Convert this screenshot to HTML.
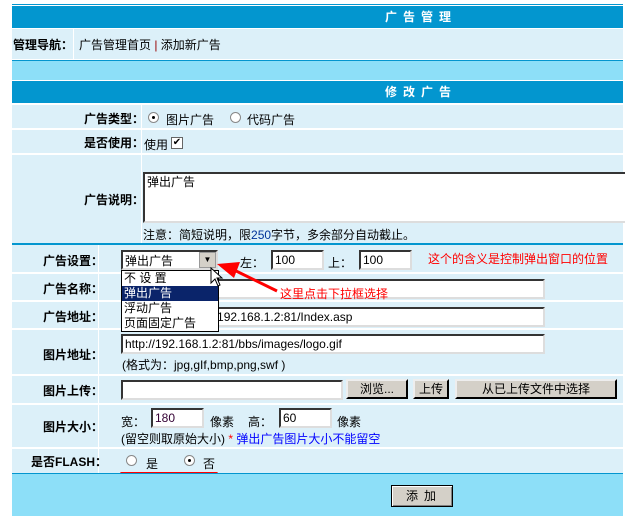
<!DOCTYPE html>
<html><head><meta charset="utf-8"><style>
*{margin:0;padding:0;box-sizing:border-box}
body{width:625px;height:522px;background:#fff;position:relative;overflow:hidden;font-family:"Liberation Sans","Noto Sans CJK SC","WenQuanYi Zen Hei",sans-serif;font-size:12px;color:#000}
.a{position:absolute;white-space:nowrap}
.hd{background:#0396cf;color:#fff;font-weight:bold;letter-spacing:6px}
.row{background:#dcf0f9}
.lb{font-weight:bold;text-align:right}
.inp{position:absolute;background:#fff;border:2px inset #888;border-right-color:#ddd;border-bottom-color:#ddd;font-size:12px;padding:1px 2px;line-height:14px}
.btn{position:absolute;background:#d4d0c8;border:2px outset #eee;border-right-color:#555;border-bottom-color:#555;text-align:center;line-height:16px}
.rad{position:absolute;width:11px;height:11px;border-radius:50%;background:#fff;border:1px solid #888}
.rad.on::after{content:"";position:absolute;left:3px;top:3px;width:3px;height:3px;background:#000;border-radius:50%}
</style></head><body>
<div class="a" style="left:12px;top:4px;width:611px;height:1px;background:#0396cf"></div>
<div class="a hd" style="left:12px;top:6px;width:611px;height:22px;line-height:22px;padding-left:373px">广告管理</div>
<div class="a row" style="left:12px;top:29px;width:611px;height:30px"></div>
<div class="a" style="left:73px;top:29px;width:1px;height:30px;background:#fff"></div>
<div class="a lb" style="left:13px;top:36px">管理导航：</div>
<div class="a" style="left:79px;top:36px">广告管理首页 <span style="color:#900">|</span> 添加新广告</div>
<div class="a" style="left:12px;top:60px;width:611px;height:1px;background:#0396cf"></div>
<div class="a" style="left:12px;top:61px;width:611px;height:19px;background:#8ddff8"></div>
<div class="a" style="left:12px;top:81px;width:611px;height:1px;background:#0396cf"></div>
<div class="a hd" style="left:12px;top:82px;width:611px;height:21px;line-height:21px;padding-left:373px">修改广告</div>

<div class="a row" style="left:12px;top:105px;width:611px;height:23px"></div>
<div class="a row" style="left:12px;top:130px;width:611px;height:23px"></div>
<div class="a row" style="left:12px;top:155px;width:611px;height:88px"></div>
<div class="a" style="left:141px;top:105px;width:1px;height:138px;background:#fff"></div>
<div class="a lb" style="left:84px;top:110px">广告类型：</div>
<div class="rad on" style="left:148px;top:112px"></div>
<div class="a" style="left:166px;top:111px">图片广告</div>
<div class="rad" style="left:230px;top:112px"></div>
<div class="a" style="left:247px;top:111px">代码广告</div>
<div class="a lb" style="left:84px;top:134px">是否使用：</div>
<div class="a" style="left:144px;top:136px">使用</div>
<div class="a" style="left:171px;top:137px;width:12px;height:12px;background:#fff;border:1px solid #666;font-size:10px;line-height:10px;text-align:center">✔</div>
<div class="a lb" style="left:84px;top:191px">广告说明：</div>
<div class="inp" style="left:143px;top:172px;width:484px;height:51px">弹出广告</div>
<div class="a" style="left:143px;top:226px">注意：简短说明，限<span style="color:#039">250</span>字节，多余部分自动截止。</div>

<div class="a" style="left:12px;top:243px;width:611px;height:2px;background:#0396cf"></div>
<div class="a row" style="left:12px;top:245px;width:611px;height:27px"></div>
<div class="a row" style="left:12px;top:274px;width:611px;height:26px"></div>
<div class="a row" style="left:12px;top:302px;width:611px;height:26px"></div>
<div class="a row" style="left:12px;top:330px;width:611px;height:44px"></div>
<div class="a row" style="left:12px;top:376px;width:611px;height:27px"></div>
<div class="a row" style="left:12px;top:405px;width:611px;height:42px"></div>
<div class="a row" style="left:12px;top:449px;width:611px;height:24px"></div>
<div class="a" style="left:98px;top:245px;width:1px;height:228px;background:#fff"></div>
<div class="a lb" style="left:43px;top:252px">广告设置：</div>
<div class="a lb" style="left:43px;top:280px">广告名称：</div>
<div class="a lb" style="left:43px;top:308px">广告地址：</div>
<div class="a lb" style="left:43px;top:346px">图片地址：</div>
<div class="a lb" style="left:43px;top:382px">图片上传：</div>
<div class="a lb" style="left:43px;top:418px">图片大小：</div>
<div class="a lb" style="left:31px;top:453px">是否FLASH：</div>

<div class="inp" style="left:183px;top:279px;width:362px;height:20px"></div>
<div class="inp" style="left:183px;top:307px;width:362px;height:20px;padding-left:2px">http://192.168.1.2:81/Index.asp</div>
<div class="inp" style="left:121px;top:334px;width:424px;height:20px">http://192.168.1.2:81/bbs/images/logo.gif</div>
<div class="a" style="left:122px;top:356px">(格式为：jpg,gIf,bmp,png,swf )</div>

<div class="inp" style="left:121px;top:250px;width:97px;height:20px;padding-top:2px">弹出广告</div>
<div class="a" style="left:199px;top:252px;width:17px;height:16px;background:#d4d0c8;border:1px solid #999;font-size:8px;line-height:14px;text-align:center">▼</div>
<div class="a" style="left:121px;top:270px;width:98px;height:62px;background:#fff;border:1px solid #000;line-height:15px;font-size:12px">
<div style="padding-left:2px">不 设 置</div>
<div style="padding-left:2px;background:#0a246a;color:#fff">弹出广告</div>
<div style="padding-left:2px">浮动广告</div>
<div style="padding-left:2px">页面固定广告</div>
</div>
<div class="a" style="left:240px;top:254px">左：</div>
<div class="inp" style="left:271px;top:250px;width:53px;height:20px">100</div>
<div class="a" style="left:328px;top:254px">上：</div>
<div class="inp" style="left:359px;top:250px;width:53px;height:20px">100</div>
<div class="a" style="left:428px;top:250px;color:#f00">这个的含义是控制弹出窗口的位置</div>
<svg class="a" style="left:0;top:0" width="625" height="522"><line x1="230" y1="268" x2="277" y2="291" stroke="#f00" stroke-width="3"/><polygon points="217,264 240,262 234,278" fill="#f00"/><path d="M211 268 L211 283 L215 279 L218 286 L220 285 L217 278 L222 278 Z" fill="#fff" stroke="#000" stroke-width="1"/></svg>
<div class="a" style="left:280px;top:285px;color:#f00">这里点击下拉框选择</div>

<div class="inp" style="left:121px;top:380px;width:222px;height:20px"></div>
<div class="btn" style="left:346px;top:379px;width:62px;height:20px">浏览...</div>
<div class="btn" style="left:413px;top:379px;width:36px;height:20px">上传</div>
<div class="btn" style="left:455px;top:379px;width:162px;height:20px">从已上传文件中选择</div>

<div class="a" style="left:121px;top:413px">宽：</div>
<div class="inp" style="left:151px;top:408px;width:53px;height:20px;color:#303">180</div>
<div class="a" style="left:210px;top:413px">像素</div>
<div class="a" style="left:248px;top:413px">高：</div>
<div class="inp" style="left:279px;top:408px;width:53px;height:20px">60</div>
<div class="a" style="left:337px;top:413px">像素</div>
<div class="a" style="left:121px;top:430px">(留空则取原始大小) <span style="color:#f00">*</span> <span style="color:#00f">弹出广告图片大小不能留空</span></div>

<div class="rad" style="left:126px;top:455px"></div>
<div class="a" style="left:146px;top:455px">是</div>
<div class="rad on" style="left:184px;top:455px"></div>
<div class="a" style="left:203px;top:455px">否</div>
<div class="a" style="left:120px;top:472px;width:98px;height:3px;background:#f00;border-radius:2px"></div>

<div class="a" style="left:12px;top:473px;width:611px;height:1px;background:#0396cf"></div>
<div class="a" style="left:12px;top:474px;width:611px;height:42px;background:#8ddff8"></div>
<div class="btn" style="left:391px;top:485px;width:62px;height:22px;border:1px solid #000;box-shadow:inset 1px 1px #fff,inset -1px -1px #808080;line-height:20px;letter-spacing:6px;padding-left:4px">添加</div>
</body></html>
